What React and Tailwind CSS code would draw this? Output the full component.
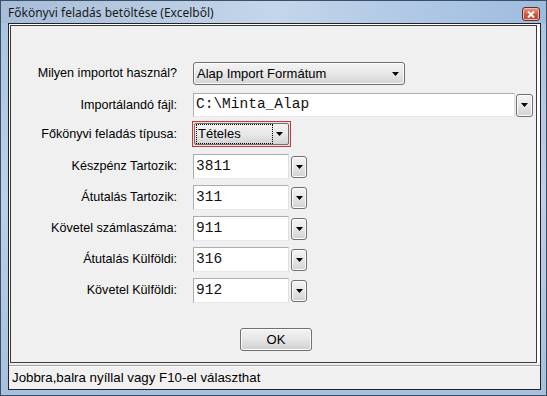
import React from "react";

const ui = { fontFamily: '"Liberation Sans", Arial, sans-serif' };
const mono = { fontFamily: '"Liberation Mono", "Courier New", monospace' };

function Arrow() {
  return (
    <svg width="7" height="4" viewBox="0 0 7 4" className="block">
      <path d="M0 0H7L3.5 4Z" fill="#000" />
    </svg>
  );
}

function DropButton({ h = "h-[22px]", w = "w-[16px]" }) {
  return (
    <div
      className={`${w} ${h} flex items-center justify-center rounded-[3px] border border-[#707070] bg-gradient-to-b from-[#f4f4f4] via-[#e6e6e6] to-[#d2d2d2] shadow-[inset_0_0_0_1px_#fcfcfc]`}
    >
      <Arrow />
    </div>
  );
}

function Field({ value, w }) {
  return (
    <div
      className={`${w} h-full flex items-center bg-white border border-[#abadb3] border-b-[#e3e9ef] border-r-[#dbdfe6] pl-[2px] text-[14.5px] text-[#111]`}
      style={mono}
    >
      {value}
    </div>
  );
}

function Row({ label, mt, h, children }) {
  return (
    <div className={`flex items-center ${mt} ${h}`}>
      <div className="w-[167px] text-right text-[12.6px] text-[#000] pr-[1px] whitespace-nowrap">{label}</div>
      <div className="ml-[15px] flex items-center h-full">{children}</div>
    </div>
  );
}

export default function App() {
  const codes = [
    ["Készpénz Tartozik:", "3811", "mt-[7px]"],
    ["Átutalás Tartozik:", "311", "mt-[6px]"],
    ["Követel számlaszáma:", "911", "mt-[6px]"],
    ["Átutalás Külföldi:", "316", "mt-[6px]"],
    ["Követel Külföldi:", "912", "mt-[6px]"],
  ];

  return (
    <div
      className="w-[547px] h-[396px] flex flex-col border border-[#3d4f66] bg-gradient-to-b from-[#a9c3e2] via-[#bcd0e8] to-[#a6c0df]"
      style={ui}
    >
      {/* Title bar */}
      <div className="h-[22px] flex items-start bg-gradient-to-r from-[#a7bdd8] via-[#c4d6ea] to-[#9dbbe0]">
        <div
          className="mt-[3px] ml-[7px] text-[12px] text-[#1a1a1a]"
          style={{ fontFamily: '"Noto Sans", "Open Sans", sans-serif' }}
        >
          Főkönyvi feladás betöltése (Excelből)
        </div>
        <div className="ml-auto mr-[6px] mt-[6px] w-[18px] h-[14px] rounded-[3px] border border-[#6b2a1f] bg-gradient-to-b from-[#e6a192] via-[#cf5a40] to-[#c0442b] flex items-center justify-center shadow-[inset_0_0_0_1px_#f0b8aa]">
          <svg width="8" height="7" viewBox="0 0 8 7">
            <path d="M1 0.5L7 6.5M7 0.5L1 6.5" stroke="#fff" strokeWidth="2" />
          </svg>
        </div>
      </div>

      {/* Client area */}
      <div className="flex-1 ml-[7px] mr-[5px] mb-[5px] flex flex-col border border-[#222] bg-white">
        <div className="flex-1 mt-[1px] ml-[1px] mr-[3px] border border-[#3a3a3a] bg-[#f0f0f0] flex flex-col">
          <div className="pt-[36px] flex flex-col">
            <Row label="Milyen importot használ?" mt="" h="h-[23px]">
              <div className="w-[212px] h-[23px] flex items-center rounded-[3px] border border-[#707070] bg-gradient-to-b from-[#f3f3f3] via-[#e8e8e8] to-[#d4d4d4] shadow-[inset_0_0_0_1px_#fbfbfb] pl-[3px] pr-[5px]">
                <span className="text-[13px] text-black">Alap Import Formátum</span>
                <span className="ml-auto">
                  <Arrow />
                </span>
              </div>
            </Row>

            <Row label="Importálandó fájl:" mt="mt-[8px]" h="h-[24px]">
              <Field value="C:\Minta_Alap" w="w-[322px]" />
              <div className="ml-[1px]">
                <DropButton h="h-[23px]" w="w-[17px]" />
              </div>
            </Row>

            <Row label="Főkönyvi feladás típusa:" mt="mt-[4px]" h="h-[26px]">
              <div className="-ml-[1px] w-[99px] h-[26px] border border-[#c4393d] p-[1px] bg-[#f4dcdc]">
                <div className="w-full h-full flex items-center rounded-[2px] border border-[#707070] bg-gradient-to-b from-[#f3f3f3] via-[#e8e8e8] to-[#d4d4d4] pr-[3px]">
                  <div className="ml-[1px] w-[77px] h-[20px] border border-dotted border-black flex items-center pl-[1px]">
                    <span className="text-[13px] text-black">Tételes</span>
                  </div>
                  <span className="ml-auto mr-[2px]">
                    <Arrow />
                  </span>
                </div>
              </div>
            </Row>

            {codes.map(([label, value, mt]) => (
              <Row key={label} label={label} mt={mt} h="h-[25px]">
                <Field value={value} w="w-[96px]" />
                <div className="ml-[2px]">
                  <DropButton />
                </div>
              </Row>
            ))}

            <div className="mt-[25px] pl-[229px]">
              <div className="w-[72px] h-[23px] flex items-center justify-center rounded-[3px] border border-[#707070] bg-gradient-to-b from-[#f2f2f2] via-[#e6e6e6] to-[#cfcfcf] shadow-[inset_0_0_0_1px_#fcfcfc] text-[13px] text-black">
                OK
              </div>
            </div>
          </div>
        </div>

        {/* Status bar */}
        <div className="h-[26px] bg-[#f0f0f0] pt-[2px]">
          <div className="h-full border-t border-[#a0a0a0] shadow-[inset_0_1px_0_#fff] flex items-center pl-[3px] text-[13.3px] text-black whitespace-nowrap">
            Jobbra,balra nyíllal vagy F10-el választhat
          </div>
        </div>
      </div>
    </div>
  );
}
